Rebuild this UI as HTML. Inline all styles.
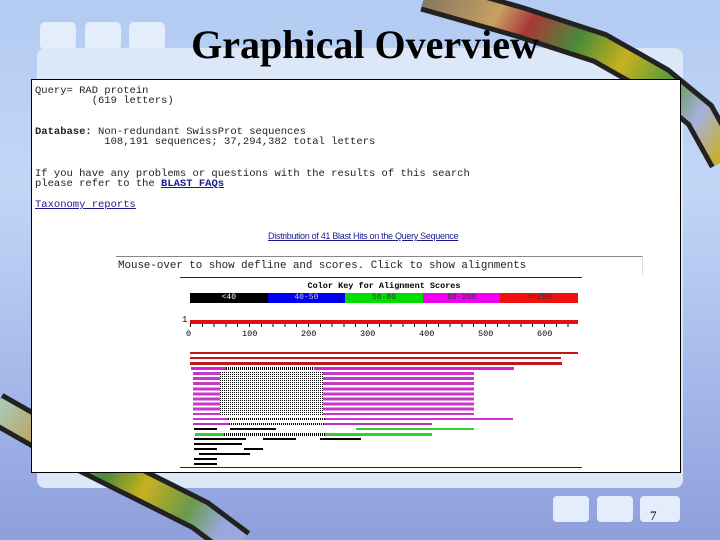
<!DOCTYPE html>
<html><head><meta charset="utf-8"><style>
*{margin:0;padding:0;box-sizing:border-box}
html,body{width:720px;height:540px;overflow:hidden}
body{position:relative;background:linear-gradient(180deg,#b3cbf2 0%,#c3d6f6 35%,#a5b9ea 70%,#8e9fdc 100%);font-family:"Liberation Sans",sans-serif}
.a{position:absolute}
.m{font-family:"Liberation Mono",monospace;font-size:10.5px;color:#222;white-space:pre;line-height:10px}
.h{background:repeating-linear-gradient(90deg,#000 0 1px,#fff 1px 2px)}
</style></head><body>
<div class="a" style="left:40px;top:22px;width:36px;height:28px;background:#e4edfb;border-radius:5px"></div>
<div class="a" style="left:85px;top:22px;width:36px;height:28px;background:#e4edfb;border-radius:5px"></div>
<div class="a" style="left:129px;top:22px;width:36px;height:28px;background:#e4edfb;border-radius:5px"></div>
<div class="a" style="left:37px;top:48px;width:646px;height:440px;background:#dce7f8;border-radius:8px"></div>
<div class="a" style="left:553px;top:496px;width:36px;height:26px;background:#e4edfb;border-radius:4px"></div>
<div class="a" style="left:597px;top:496px;width:36px;height:26px;background:#e4edfb;border-radius:4px"></div>
<div class="a" style="left:640px;top:496px;width:40px;height:26px;background:#e4edfb;border-radius:4px"></div>
<svg class="a" style="left:0;top:0" width="720" height="540">
<defs>
<linearGradient id="g1" x1="430" y1="0" x2="720" y2="160" gradientUnits="userSpaceOnUse">
<stop offset="0" stop-color="#8a7a60"/><stop offset="0.2" stop-color="#c8a060"/><stop offset="0.3" stop-color="#a83838"/><stop offset="0.45" stop-color="#4a8a3a"/><stop offset="0.6" stop-color="#c8b020"/><stop offset="0.75" stop-color="#5a9a3a"/><stop offset="0.88" stop-color="#a8b0e0"/><stop offset="1" stop-color="#c8b020"/></linearGradient>
<linearGradient id="g2" x1="0" y1="410" x2="240" y2="540" gradientUnits="userSpaceOnUse">
<stop offset="0" stop-color="#a8c8b0"/><stop offset="0.25" stop-color="#c89040"/><stop offset="0.45" stop-color="#4a8a3a"/><stop offset="0.6" stop-color="#c8b020"/><stop offset="0.78" stop-color="#6a9a4a"/><stop offset="0.92" stop-color="#9aa8e0"/></linearGradient>
</defs>
<path d="M425,-5 L520,22 L600,48 L660,82 L700,115 L725,160" fill="none" stroke="#222" stroke-width="34"/>
<path d="M425,-5 L520,22 L600,48 L660,82 L700,115 L725,160" fill="none" stroke="url(#g1)" stroke-width="24"/>
<path d="M-5,408 L60,445 L130,480 L200,515 L240,545" fill="none" stroke="#222" stroke-width="34"/>
<path d="M-5,408 L60,445 L130,480 L200,515 L240,545" fill="none" stroke="url(#g2)" stroke-width="24"/>
</svg>
<div class="a" style="left:0;top:21px;width:720px;text-align:center;font-family:'Liberation Serif',serif;font-weight:bold;font-size:40px;line-height:48px;color:#000;padding-left:10px">Graphical Overview</div>
<div class="a" style="left:31px;top:79px;width:650px;height:394px;background:#fff;border:1px solid #000"></div>
<div class="a m" style="left:35px;top:86px">Query= RAD protein
         (619 letters)</div>
<div class="a m" style="left:35px;top:127px"><b>Database:</b> Non-redundant SwissProt sequences
           108,191 sequences; 37,294,382 total letters</div>
<div class="a m" style="left:35px;top:169px">If you have any problems or questions with the results of this search
please refer to the <b style="color:#1a1a90;text-decoration:underline">BLAST FAQs</b></div>
<div class="a m" style="left:35px;top:200px;color:#1a1a90;text-decoration:underline">Taxonomy reports</div>
<div class="a" style="left:268px;top:231px;font-size:9px;color:#1a1a90;text-decoration:underline;letter-spacing:-0.3px">Distribution of 41 Blast Hits on the Query Sequence</div>
<div class="a m" style="left:116px;top:256px;width:527px;height:19px;border-top:1px solid #888;border-right:1px solid #ddd;padding:4px 0 0 2px;font-size:10.8px">Mouse-over to show defline and scores. Click to show alignments</div>
<div class="a" style="left:180px;top:277px;width:402px;height:1px;background:#225"></div>
<div class="a" style="left:180px;top:467px;width:402px;height:1px;background:#225"></div>
<div class="a" style="left:190px;top:281px;width:388px;text-align:center;font-family:'Liberation Mono',monospace;font-size:8.5px;font-weight:bold">Color Key for Alignment Scores</div>
<div class="a" style="left:190px;top:293px;width:388px;height:10px;display:flex;font-family:'Liberation Mono',monospace;font-size:8px;line-height:10px;text-align:center">
<div style="flex:1;background:#000;color:#fff">&lt;40</div><div style="flex:1;background:#0000f0;color:#ccc">40-50</div><div style="flex:1;background:#00e000;color:#333">50-80</div><div style="flex:1;background:#f000f0;color:#333">80-200</div><div style="flex:1;background:#f01010;color:#333">&gt;=200</div></div>
<div class="a" style="left:182px;top:315px;font-family:'Liberation Mono',monospace;font-size:9px">1</div>
<div class="a" style="left:190px;top:320px;width:388px;height:4px;background:#e01010"></div>
<div class="a" style="left:190px;top:324px;width:388px;height:3px;background:repeating-linear-gradient(90deg,#000 0 1px,transparent 1px 11.8px)"></div>
<div class="a" style="left:186px;top:329px;width:400px;height:10px;font-family:'Liberation Mono',monospace;font-size:8.5px">
<span class="a" style="left:0">0</span><span class="a" style="left:56px">100</span><span class="a" style="left:115px">200</span><span class="a" style="left:174px">300</span><span class="a" style="left:233px">400</span><span class="a" style="left:292px">500</span><span class="a" style="left:351px">600</span></div>
<div class="a" style="left:190px;top:352px;width:388px;height:2px;background:#c01818"></div>
<div class="a" style="left:190px;top:357px;width:371px;height:2px;background:#c01818"></div>
<div class="a" style="left:190px;top:362px;width:372px;height:3px;background:#c01818"></div>
<div class="a" style="left:191px;top:367px;width:323px;height:3px;background:#d020d0"></div><div class="a h" style="left:226px;top:367px;width:88px;height:3px"></div>
<div class="a" style="left:193px;top:372px;width:281px;height:43px;background:repeating-linear-gradient(180deg,#c838c8 0 3px,#fff 3px 5.1px)"></div>
<div class="a" style="left:220px;top:372px;width:103px;height:43px;background:repeating-linear-gradient(180deg,transparent 0 1px,#fff 1px 2px),repeating-linear-gradient(90deg,#000 0 1px,#fff 1px 2px)"></div>
<div class="a" style="left:193px;top:418px;width:320px;height:2px;background:#d030d0"></div><div class="a h" style="left:228px;top:418px;width:97px;height:2px"></div>
<div class="a" style="left:193px;top:423px;width:239px;height:2px;background:#c030c0"></div><div class="a h" style="left:229px;top:423px;width:95px;height:2px"></div>
<div class="a" style="left:194px;top:428px;width:23px;height:2px;background:#000"></div>
<div class="a" style="left:230px;top:428px;width:46px;height:2px;background:#000"></div>
<div class="a" style="left:356px;top:428px;width:118px;height:2px;background:#30d030"></div>
<div class="a" style="left:195px;top:433px;width:237px;height:3px;background:#30d030"></div><div class="a h" style="left:224px;top:433px;width:101px;height:3px"></div>
<div class="a" style="left:194px;top:438px;width:52px;height:2px;background:#000"></div>
<div class="a" style="left:263px;top:438px;width:33px;height:2px;background:#000"></div>
<div class="a" style="left:320px;top:438px;width:41px;height:2px;background:#000"></div>
<div class="a" style="left:194px;top:443px;width:48px;height:2px;background:#000"></div>
<div class="a" style="left:194px;top:448px;width:23px;height:2px;background:#000"></div>
<div class="a" style="left:244px;top:448px;width:19px;height:2px;background:#000"></div>
<div class="a" style="left:199px;top:453px;width:51px;height:2px;background:#000"></div>
<div class="a" style="left:194px;top:458px;width:23px;height:2px;background:#000"></div>
<div class="a" style="left:194px;top:463px;width:23px;height:2px;background:#000"></div>
<div class="a" style="left:650px;top:508px;font-family:'Liberation Serif',serif;font-size:13px">7</div>
</body></html>
